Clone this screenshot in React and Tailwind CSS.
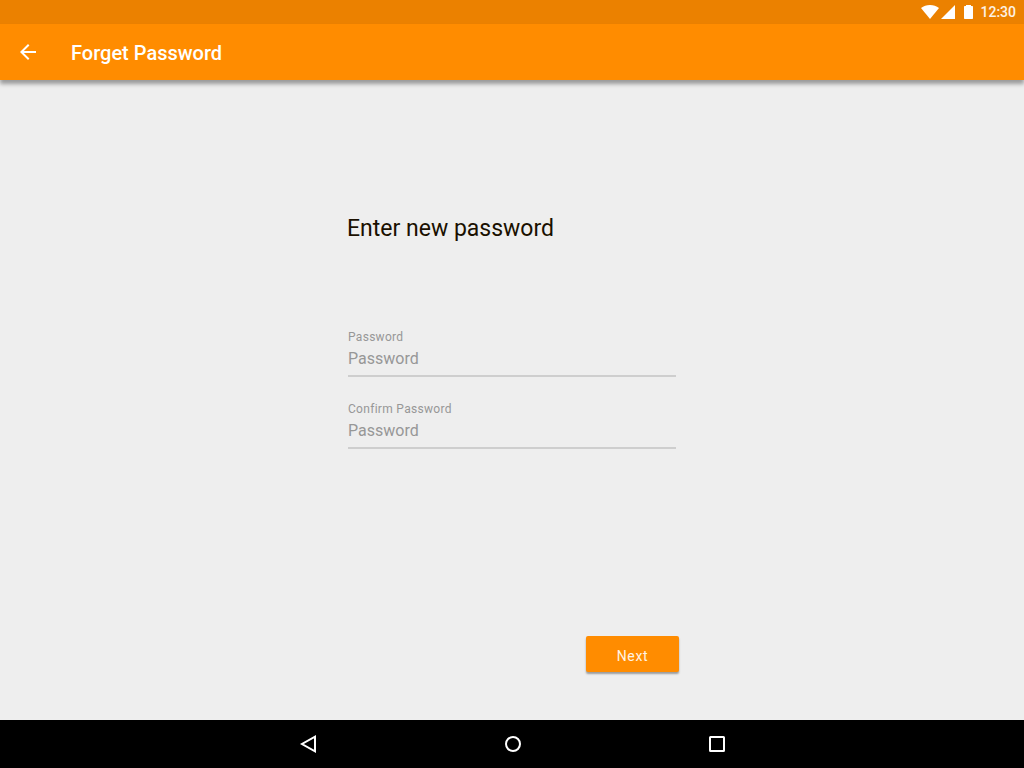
import React from "react";

function WifiIcon() {
  return (
    <svg width="18" height="14" viewBox="0 0 18 14" fill="currentColor" aria-hidden="true">
      <path d="M9 14 0 3C2.600 1 5.600 0 9 0s6.400 1 9 3L9 14Z" />
    </svg>
  );
}

function SignalIcon() {
  return (
    <svg width="14" height="14" viewBox="0 0 14 14" fill="currentColor" aria-hidden="true">
      <path d="M0 14 14 0v14H0Z" />
    </svg>
  );
}

function BatteryIcon() {
  return (
    <svg width="9" height="14" viewBox="0 0 9 14" fill="currentColor" aria-hidden="true">
      <path d="M2 0h5v1h1.300q.7 0 .7.700v11.600q0 .7-.7.700H.7q-.7 0-.7-.7V1.700Q0 1 .7 1H2V0Z" />
    </svg>
  );
}

function StatusBar() {
  return (
    <div className="flex h-6 items-center justify-end bg-[#eb8100] pr-2 text-white">
      <WifiIcon />
      <span className="ml-0.5"><SignalIcon /></span>
      <span className="ml-[9px]"><BatteryIcon /></span>
      <time className="ml-[7px] text-sm leading-6 font-medium text-white/90">12:30</time>
    </div>
  );
}

function AppBar() {
  return (
    <header className="flex h-14 items-center bg-[#ff8c00] px-4 text-white shadow-[0_4px_4px_rgba(0,0,0,0.35)]">
      <button type="button" aria-label="Back" className="size-6">
        <svg width="24" height="24" viewBox="0 0 24 24" fill="currentColor" aria-hidden="true">
          <path d="M20 11H7.830l5.590-5.590L12 4l-8 8 8 8 1.410-1.410L7.830 13H20v-2z" />
        </svg>
      </button>
      <h1 className="ml-[31px] pt-0.5 text-xl font-medium">Forget Password</h1>
    </header>
  );
}

function PasswordField({ id, label }) {
  return (
    <div className="flex h-14 flex-col border-b-2 border-[#cecece] pt-2">
      <label htmlFor={id} className="text-xs leading-4 tracking-wide text-[#979797]">{label}</label>
      <input
        id={id}
        type="password"
        placeholder="Password"
        className="w-full bg-transparent pt-0.5 text-base leading-6 text-[#333] outline-none placeholder:text-[#979797]"
      />
    </div>
  );
}

function NavigationBar() {
  return (
    <nav className="flex h-12 items-center justify-center gap-[180px] bg-black pl-0.5 text-white">
      <button type="button" aria-label="Back" className="size-6">
        <svg width="24" height="24" viewBox="0 0 24 24" fill="none" stroke="currentColor" strokeWidth="2" aria-hidden="true">
          <path d="M18 4.600v14.800L5 12Z" />
        </svg>
      </button>
      <button type="button" aria-label="Home" className="size-6">
        <svg width="24" height="24" viewBox="0 0 24 24" fill="none" stroke="currentColor" strokeWidth="2" aria-hidden="true">
          <circle cx="12" cy="12" r="7" />
        </svg>
      </button>
      <button type="button" aria-label="Recent apps" className="size-6">
        <svg width="24" height="24" viewBox="0 0 24 24" fill="none" stroke="currentColor" strokeWidth="2" aria-hidden="true">
          <rect x="5" y="5" width="14" height="14" rx="0.5" />
        </svg>
      </button>
    </nav>
  );
}

export default function App() {
  return (
    <div className="flex min-h-screen flex-col bg-[#eeeeee] font-['Roboto',sans-serif]">
      <StatusBar />
      <AppBar />
      <main className="flex flex-1 flex-col px-4">
        <form className="mx-auto flex w-full max-w-[334px] flex-1 flex-col pt-[133px] pb-12" onSubmit={(e) => e.preventDefault()}>
          <h2 className="pl-0.5 text-[23px] leading-8 text-[#1a1000]">Enter new password</h2>
          <div className="mt-[76px] flex flex-col gap-4 px-[3px]">
            <PasswordField id="password" label="Password" />
            <PasswordField id="confirm-password" label="Confirm Password" />
          </div>
          <button type="submit" className="mt-auto h-9 w-[93px] self-end rounded-xs bg-[#ff8c00] pt-1 text-sm tracking-wider text-white/90 shadow-[0_2px_2px_rgba(0,0,0,0.35)]">
            Next
          </button>
        </form>
      </main>
      <NavigationBar />
    </div>
  );
}
